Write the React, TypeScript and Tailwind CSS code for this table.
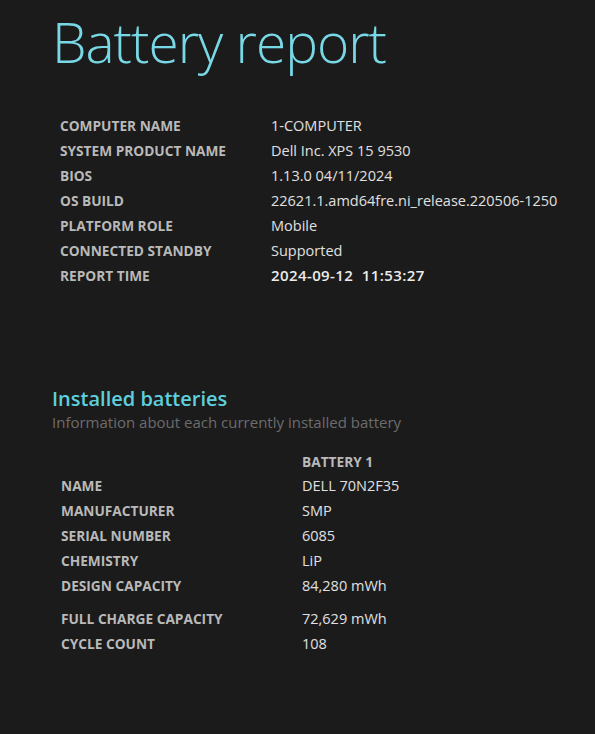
import React from 'react';

const systemInfo: [string, string, boolean?][] = [
  ['COMPUTER NAME', '1-COMPUTER'],
  ['SYSTEM PRODUCT NAME', 'Dell Inc. XPS 15 9530'],
  ['BIOS', '1.13.0 04/11/2024'],
  ['OS BUILD', '22621.1.amd64fre.ni_release.220506-1250'],
  ['PLATFORM ROLE', 'Mobile'],
  ['CONNECTED STANDBY', 'Supported'],
  ['REPORT TIME', '2024-09-12\u00a0\u00a011:53:27', true],
];

const batteryInfo: [string, string][] = [
  ['NAME', 'DELL 70N2F35'],
  ['MANUFACTURER', 'SMP'],
  ['SERIAL NUMBER', '6085'],
  ['CHEMISTRY', 'LiP'],
  ['DESIGN CAPACITY', '84,280 mWh'],
];

const batteryInfo2: [string, string][] = [
  ['FULL CHARGE CAPACITY', '72,629 mWh'],
  ['CYCLE COUNT', '108'],
];

const font = { fontFamily: '"Segoe UI", "Open Sans", "Noto Sans", sans-serif' };

const labelCls = 'shrink-0 text-[13.7px] leading-[25px] font-bold text-[#b9b9b9]';
const valueCls = 'text-[14.5px] leading-[25px] text-[#e0e0e0]';

export default function App() {
  return (
    <div className="min-h-screen w-full bg-[#1b1b1b] pl-[52px] pb-10" style={font}>
      {/* Title */}
      <h1 className="pt-[8px] text-[55px] leading-[68px] font-light text-[#78d8e5] tracking-[-1px]">
        Battery report
      </h1>

      {/* System info */}
      <div className="mt-[37px] ml-[8px] flex flex-col">
        {systemInfo.map(([label, value, bold]) => (
          <div key={label} className="flex h-[25px] items-baseline">
            <span className={`w-[211px] ${labelCls}`}>{label}</span>
            <span
              className={
                bold ? 'text-[15px] leading-[25px] font-semibold tracking-[0.4px] text-[#ececec]' : valueCls
              }
            >
              {value}
            </span>
          </div>
        ))}
      </div>

      {/* Installed batteries */}
      <div className="mt-[98px]">
        <h2 className="text-[20px] leading-[26px] font-semibold text-[#5ecfdc]">Installed batteries</h2>
        <p className="text-[15px] leading-[20px] text-[#6c6c6c]">
          Information about each currently installed battery
        </p>
      </div>

      <div className="mt-[17px] ml-[9px] flex flex-col">
        <div className="flex h-[24px] items-baseline">
          <span className="w-[241px] shrink-0" />
          <span className={labelCls}>BATTERY 1</span>
        </div>
        {batteryInfo.map(([label, value]) => (
          <div key={label} className="flex h-[25px] items-baseline">
            <span className={`w-[241px] ${labelCls}`}>{label}</span>
            <span className={valueCls}>{value}</span>
          </div>
        ))}
        <div className="h-[8px]" />
        {batteryInfo2.map(([label, value]) => (
          <div key={label} className="flex h-[25px] items-baseline">
            <span className={`w-[241px] ${labelCls}`}>{label}</span>
            <span className={valueCls}>{value}</span>
          </div>
        ))}
      </div>
    </div>
  );
}
